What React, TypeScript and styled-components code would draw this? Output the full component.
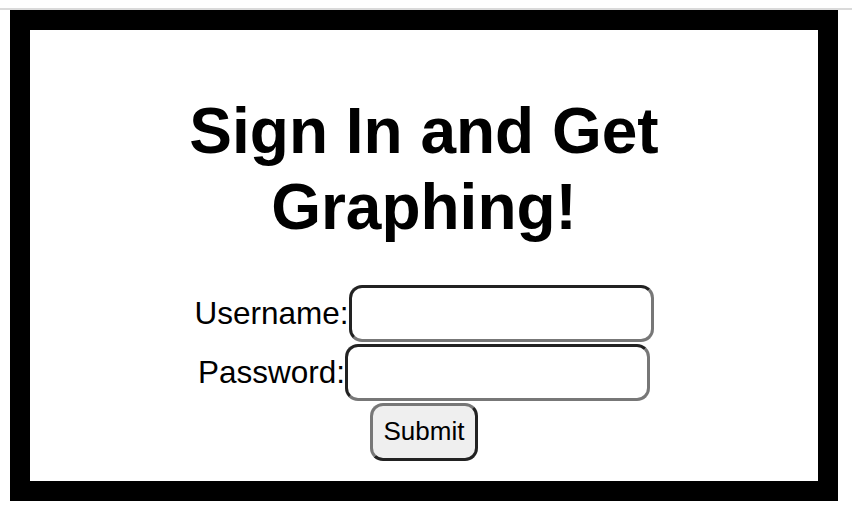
import React from "react";
import styled, { createGlobalStyle } from "styled-components";

const Global = createGlobalStyle`
  html, body { margin: 0; padding: 0; background: #ffffff; }
  body { font-family: "Liberation Sans", Arial, sans-serif; color: #000; }
  * { box-sizing: border-box; }
`;

const Page = styled.div`
  padding-top: 8px;
  width: 852px;
`;

const TopRule = styled.div`
  height: 2px;
  background: #dadada;
`;

const Frame = styled.main`
  margin: 0 14px 0 10px;
  height: 491px;
  border: 20px solid #000;
  background: #fff;
  display: flex;
  flex-direction: column;
  align-items: center;
`;

const Title = styled.h1`
  margin: 63px 0 40px;
  font-size: 64px;
  line-height: 76px;
  font-weight: 700;
  text-align: center;
`;

const Form = styled.form`
  display: flex;
  flex-direction: column;
  align-items: center;
  gap: 2px;
`;

const Row = styled.div`
  display: flex;
  align-items: center;
`;

const Label = styled.label`
  font-size: 31.5px;
  line-height: 36px;
  margin-top: -2px;
`;

const Input = styled.input`
  width: 305px;
  height: 57px;
  border: 3px solid;
  border-color: #222 #777 #777 #222;
  border-radius: 13px;
  background: #fff;
  font-size: 26px;
  font-family: "Liberation Sans", Arial, sans-serif;
  padding: 0 8px;
  outline: none;
`;

const Button = styled.button`
  font-family: "Liberation Sans", Arial, sans-serif;
  font-size: 26px;
  line-height: 30px;
  padding: 10px 11px 12px;
  border: 3px solid;
  border-color: #777 #222 #222 #777;
  border-radius: 13px;
  background: #efefef;
  color: #000;
`;

export default function App() {
  return (
    <Page>
      <Global />
      <TopRule />
      <Frame>
        <Title>
          Sign In and Get
          <br />
          Graphing!
        </Title>
        <Form onSubmit={(e) => e.preventDefault()}>
          <Row>
            <Label htmlFor="username">Username:</Label>
            <Input id="username" type="text" />
          </Row>
          <Row>
            <Label htmlFor="password">Password:</Label>
            <Input id="password" type="password" />
          </Row>
          <Button type="submit">Submit</Button>
        </Form>
      </Frame>
    </Page>
  );
}
